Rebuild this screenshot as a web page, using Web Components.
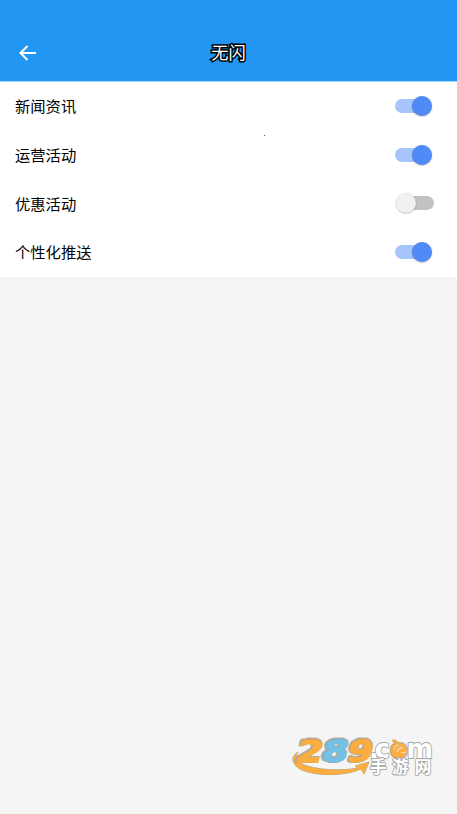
<!DOCTYPE html>
<html lang="zh-CN">
<head>
<meta charset="utf-8">
<title>无闪</title>
<style>
body{margin:0;background:#f5f5f5;font-family:"Noto Sans CJK SC",sans-serif;color:#111}
</style>
</head>
<body>
<settings-page>
  <app-header slot="header">无闪</app-header>
  <setting-row on>新闻资讯</setting-row>
  <setting-row on>运营活动</setting-row>
  <setting-row>优惠活动</setting-row>
  <setting-row on>个性化推送</setting-row>
</settings-page>
<script>
const define = (name, html) => customElements.define(name, class extends HTMLElement {
  constructor() {
    super();
    const t = document.createElement('template');
    t.innerHTML = html;
    this.attachShadow({mode: 'open'}).append(t.content.cloneNode(true));
  }
});

define('site-mark', `
<style>
:host{display:block;width:150px;height:65px}svg{display:block}
.digit{filter:drop-shadow(.8px 0 0 #aaa197) drop-shadow(-.8px 0 0 #aaa197) drop-shadow(0 .8px 0 #aaa197) drop-shadow(0 -.8px 0 #aaa197)}
</style>
<svg width="150" height="65" viewBox="289 720 150 65">
  <g stroke-linejoin="round" paint-order="stroke" font-family="DejaVu Sans" font-weight="bold">
    <path d="M298 752 C290 757 292 764 300 769 C315 777 346 776 361 769 L364 774 L369 762 L355 766 L358 768 C343 771 315 771 300 763 C296 760 295 757 298 752Z" fill="#fbad3d" stroke="#aaa197" stroke-width="1"/>
    <g font-size="31" stroke-width="1.300">
      <text class="digit" transform="translate(294.500 762) skewX(-13) scale(1.22 1)" fill="#fbad3d" stroke="#fbad3d">2</text>
      <text class="digit" transform="translate(320 762) skewX(-13) scale(1.22 1)" fill="#72c2e6" stroke="#72c2e6">8</text>
      <text class="digit" transform="translate(345.500 762) skewX(-13) scale(1.18 1)" fill="#fbad3d" stroke="#fbad3d">9</text>
    </g>
    <g font-size="26" fill="#fff" stroke="#a8a8a8" stroke-width="1.800">
      <text x="369" y="757.500">.</text>
      <text transform="translate(374.800 757.500) scale(.98 1)">c</text>
      <text transform="translate(389.500 757.500) scale(1.050 1)" fill="#fbad3d">o</text>
      <text transform="translate(406.500 757.500) scale(.98 1)">m</text>
    </g>
    <ellipse cx="398.500" cy="750" rx="7.500" ry="7.200" fill="#fbad3d"/>
    <path d="M397 743 q-4 1-5-3 q4-1 6 2" fill="#fbad3d" stroke="#aaa197" stroke-width=".6"/>
    <path d="M394 750q1-5 5-5M397 752q2-5 6-4M401 753l5-1" fill="none" stroke="#eee1ce" stroke-width="1.100"/>
    <text x="370 392 414.700" y="773" font-family="Noto Sans CJK SC" font-size="16.500" font-weight="700" fill="#fff" stroke="#a8a8a8" stroke-width="1.800">手游网</text>
  </g>
</svg>`);

define('app-header', `
<style>
:host{display:grid;grid-template-columns:55px 1fr 55px;align-items:center;height:82px;padding-top:25px;box-sizing:border-box;background:#2196f3;border-bottom:1px solid #a5d5fa}
svg{display:block;margin-left:18px}
h1{margin:0;padding-bottom:2px;text-align:center;font-size:17.300px;font-weight:400;line-height:26px;color:#fff;-webkit-text-stroke:3px #000;paint-order:stroke fill}
</style>
<svg width="20" height="18" viewBox="0 0 20 18" fill="none" stroke="#fff" stroke-width="2"><path d="M18 9H3M9.500 2L2.500 9L9.500 16"/></svg>
<h1><slot></slot></h1>`);

define('toggle-switch', `
<style>
:host{display:flex;align-items:center;width:39px;height:22px;box-sizing:border-box;padding-left:3px}
.track{display:flex;align-items:center;width:36px;height:14px;border-radius:7px;background:#c2c2c2}
.thumb{flex:none;width:20px;height:20px;border-radius:50%;margin-left:-2px;background:#f1f1f1;box-shadow:0 .5px 1.500px #0005}
:host([on]){padding-left:0}
:host([on]) .track{background:#a7c5fd}
:host([on]) .thumb{margin-left:17px;background:#5089f8}
</style>
<div class="track"><div class="thumb"></div></div>`);

define('setting-row', `
<style>
:host{display:flex;align-items:center;justify-content:space-between;height:48.800px;box-sizing:border-box;padding:0 23px 1px 15px;font-size:15.300px;line-height:22px;color:#000}
span{padding-bottom:1.600px}
</style>
<span><slot></slot></span><toggle-switch></toggle-switch>`);
document.querySelectorAll('setting-row[on]').forEach(r => r.shadowRoot.querySelector('toggle-switch').setAttribute('on', ''));

define('settings-page', `
<style>
:host{display:flex;flex-direction:column;position:relative;height:814px}
main{background:#fff;height:195px}
site-mark{margin:auto 18px 29px auto}
.speck{position:absolute;left:264px;top:135px;width:1px;height:1px;background:#555}
</style>
<slot name="header"></slot><main><slot></slot></main><site-mark></site-mark><i class="speck"></i>`);
</script>
</body>
</html>
